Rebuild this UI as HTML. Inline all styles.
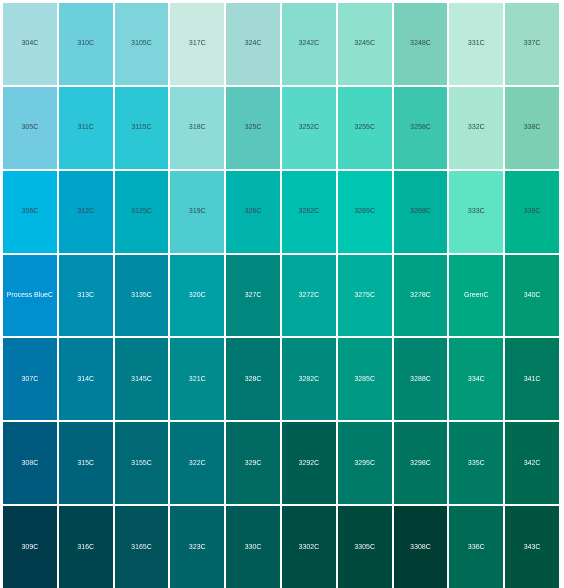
<!DOCTYPE html><html><head><style>
html,body{margin:0;padding:0;background:#fff;width:564px;height:588px;overflow:hidden}
.g{position:absolute;left:3px;top:3px;width:556px;height:585px;display:grid;grid-template-columns:repeat(10,1fr);grid-template-rows:repeat(7,1fr);gap:2px}
.g div{display:flex;align-items:center;justify-content:center;font-family:"Liberation Sans",sans-serif;font-size:7px;color:#fff}
.g div.k{color:#2f4a55}
</style></head><body><div class="g">
<div class="k" style="background:#a5dce1">304C</div><div class="k" style="background:#6dcfdc">310C</div><div class="k" style="background:#7dd5db">3105C</div><div class="k" style="background:#c8e8e0">317C</div><div class="k" style="background:#a3d9d5">324C</div><div class="k" style="background:#86dccd">3242C</div><div class="k" style="background:#8fe0cd">3245C</div><div class="k" style="background:#7acfba">3248C</div><div class="k" style="background:#bdeadb">331C</div><div class="k" style="background:#9cdbc5">337C</div>
<div class="k" style="background:#72cbe0">305C</div><div class="k" style="background:#2cc5d9">311C</div><div class="k" style="background:#2cc7d4">3115C</div><div class="k" style="background:#8edcd9">318C</div><div class="k" style="background:#5bc6bb">325C</div><div class="k" style="background:#57d8c8">3252C</div><div class="k" style="background:#47d6bf">3255C</div><div class="k" style="background:#3cc6ae">3258C</div><div class="k" style="background:#a8e6d1">332C</div><div class="k" style="background:#7dcfb3">338C</div>
<div class="k" style="background:#00b7e3">306C</div><div class="k" style="background:#00a4c8">312C</div><div class="k" style="background:#00adbc">3125C</div><div class="k" style="background:#4fcccf">319C</div><div class="k" style="background:#00b3ad">326C</div><div class="k" style="background:#00bfb0">3262C</div><div class="k" style="background:#00c7b1">3265C</div><div class="k" style="background:#00b19b">3268C</div><div class="k" style="background:#5ee3c3">333C</div><div class="k" style="background:#00b38f">339C</div>
<div style="background:#0090cf">Process BlueC</div><div style="background:#008fb2">313C</div><div style="background:#008ba3">3135C</div><div style="background:#009fa5">320C</div><div style="background:#00887f">327C</div><div style="background:#00a79a">3272C</div><div style="background:#00b09c">3275C</div><div style="background:#00a085">3278C</div><div style="background:#00a984">GreenC</div><div style="background:#009a73">340C</div>
<div style="background:#0075a8">307C</div><div style="background:#007d9b">314C</div><div style="background:#007c89">3145C</div><div style="background:#008b8e">321C</div><div style="background:#007670">328C</div><div style="background:#008a7d">3282C</div><div style="background:#009984">3285C</div><div style="background:#008670">3288C</div><div style="background:#009a78">334C</div><div style="background:#007a5e">341C</div>
<div style="background:#005a7d">308C</div><div style="background:#006379">315C</div><div style="background:#006974">3155C</div><div style="background:#00727a">322C</div><div style="background:#006a63">329C</div><div style="background:#005d52">3292C</div><div style="background:#007b69">3295C</div><div style="background:#00745f">3298C</div><div style="background:#007a63">335C</div><div style="background:#006a51">342C</div>
<div style="background:#003c4b">309C</div><div style="background:#00464f">316C</div><div style="background:#00525b">3165C</div><div style="background:#006468">323C</div><div style="background:#005a55">330C</div><div style="background:#004d44">3302C</div><div style="background:#004a3d">3305C</div><div style="background:#003d32">3308C</div><div style="background:#006b55">336C</div><div style="background:#005440">343C</div>
</div></body></html>
